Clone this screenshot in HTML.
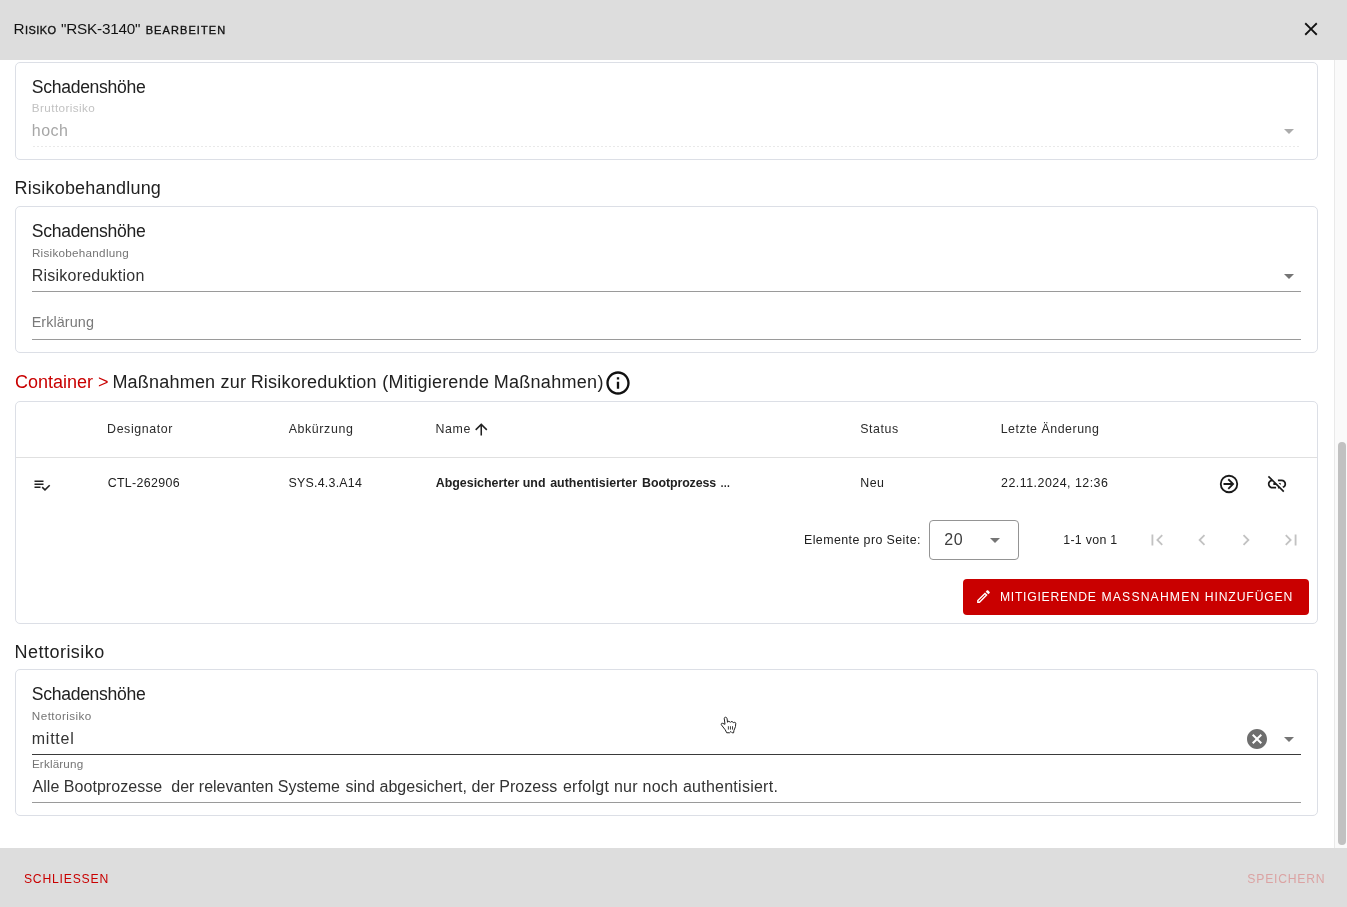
<!DOCTYPE html>
<html lang="de">
<head>
<meta charset="utf-8">
<title>Risiko bearbeiten</title>
<style>
*{box-sizing:border-box;margin:0;padding:0}
html,body{width:1347px;height:907px;overflow:hidden;background:#fff;font-family:"Liberation Sans",Arial,sans-serif;color:#212121}
.abs{position:absolute}
svg{position:absolute;display:block;overflow:visible}
#hdr{position:absolute;left:0;top:0;width:1347px;height:60px;background:#dddddd}
#ftr{position:absolute;left:0;top:848px;width:1347px;height:59px;background:#dddddd}
.card{position:absolute;left:15px;width:1303px;border:1px solid #dcdfe6;border-radius:5px;background:#fff}
.t{position:absolute;white-space:nowrap}
#txt{position:absolute;left:0;top:0;width:1347px;height:907px;will-change:transform}
.k{-webkit-text-stroke:0.35px #111}
.line{position:absolute;left:32px;width:1269px;height:1px;background:#9a9a9a}
#sbtrack{position:absolute;left:1334px;top:60px;width:13px;height:788px;background:#fafafa;border-left:1px solid #e9e9e9}
#sbthumb{position:absolute;left:1338px;top:442px;width:8px;height:403px;background:#c1c1c1;border-radius:4px}
</style>
</head>
<body>
<div id="hdr"></div>
<div id="ftr"></div>
<svg style="left:1300px;top:18px" width="22" height="22" viewBox="0 0 24 24"><path fill="#111" d="M19 6.41 17.59 5 12 10.59 6.41 5 5 6.41 10.59 12 5 17.59 6.41 19 12 13.41 17.59 19 19 17.59 13.41 12z"/></svg>

<!-- card 1 -->
<div class="card" style="top:62px;height:98px"></div>
<div class="abs" style="left:33px;top:146px;width:1268px;height:1px;background:repeating-linear-gradient(90deg,#e9e9e9 0 2px,transparent 2px 4px)"></div>
<svg style="left:1277px;top:119px" width="24" height="24" viewBox="0 0 24 24"><path fill="#ababab" d="M7 10l5 5 5-5z"/></svg>

<!-- card 2 -->
<div class="card" style="top:206px;height:147px"></div>
<svg style="left:1277px;top:264px" width="24" height="24" viewBox="0 0 24 24"><path fill="#757575" d="M7 10l5 5 5-5z"/></svg>
<div class="line" style="top:291px"></div>
<div class="line" style="top:339px"></div>

<svg style="left:604px;top:369px" width="28" height="28" viewBox="0 0 24 24"><path fill="#111" d="M11 7h2v2h-2zm0 4h2v6h-2zm1-9C6.48 2 2 6.48 2 12s4.48 10 10 10 10-4.48 10-10S17.52 2 12 2zm0 18c-4.41 0-8-3.59-8-8s3.590-8 8-8 8 3.590 8 8-3.590 8-8 8z"/></svg>

<!-- card 3 -->
<div class="card" style="top:401px;height:223px"></div>
<div class="abs" style="left:16px;top:457px;width:1301px;height:1px;background:#e0e0e0"></div>
<svg style="left:471.5px;top:420px" width="18.5" height="18.5" viewBox="0 0 24 24"><path fill="#222" d="M13 20H11V8L5.500 13.500 4.080 12.080 12 4.160 19.920 12.080 18.500 13.500 13 8V20Z"/></svg>
<svg style="left:32.5px;top:475.600px" width="18" height="18" viewBox="0 0 24 24"><path fill="#222" d="M14 10H2V12H14V10M14 6H2V8H14V6M2 16H10V14H2V16M21.500 11.500 23 13 16 20 11.500 15.500 13 14 16 17 21.500 11.500Z"/></svg>
<svg style="left:1217.800px;top:472.800px" width="22" height="22" viewBox="0 0 24 24"><path fill="#1a1a1a" d="M6 13V11H14L10.500 7.500 11.920 6.080 17.840 12 11.920 17.920 10.500 16.500 14 13H6M22 12A10 10 0 0 1 12 22 10 10 0 0 1 2 12 10 10 0 0 1 12 2 10 10 0 0 1 22 12M20 12A8 8 0 0 0 12 4 8 8 0 0 0 4 12 8 8 0 0 0 12 20 8 8 0 0 0 20 12Z"/></svg>
<svg style="left:1265.800px;top:472.800px" width="22" height="22" viewBox="0 0 24 24"><path fill="#1a1a1a" d="M17 7H13V8.900H17C18.710 8.900 20.100 10.290 20.100 12 20.100 13.430 19.120 14.630 17.790 15L19.250 16.440C20.880 15.610 22 13.950 22 12A5 5 0 0 0 17 7M16 11H13.810L15.810 13H16V11M2 4.270 5.110 7.380C3.290 8.120 2 9.910 2 12A5 5 0 0 0 7 17H11V15.100H7C5.290 15.100 3.900 13.710 3.900 12 3.900 10.410 5.110 9.100 6.660 8.930L8.730 11H8V13H10.730L13 15.270V17H14.730L18.740 21 20 19.740 3.270 3 2 4.270Z"/></svg>

<div class="abs" style="left:929px;top:520px;width:90px;height:40px;border:1px solid #949494;border-radius:4px"></div>
<svg style="left:983.300px;top:528px" width="24" height="24" viewBox="0 0 24 24"><path fill="#757575" d="M7 10l5 5 5-5z"/></svg>
<svg style="left:1145.700px;top:528.900px" width="22" height="22" viewBox="0 0 24 24"><path fill="#c2c2c2" d="M18.410 16.590 13.820 12l4.590-4.590L17 6l-6 6 6 6zM6 6h2v12H6z"/></svg>
<svg style="left:1190.900px;top:528.900px" width="22" height="22" viewBox="0 0 24 24"><path fill="#c2c2c2" d="M15.410 7.410 14 6l-6 6 6 6 1.410-1.410L10.830 12z"/></svg>
<svg style="left:1234.800px;top:528.900px" width="22" height="22" viewBox="0 0 24 24"><path fill="#c2c2c2" d="M10 6 8.590 7.410 13.170 12l-4.580 4.590L10 18l6-6z"/></svg>
<svg style="left:1279.900px;top:528.900px" width="22" height="22" viewBox="0 0 24 24"><path fill="#c2c2c2" d="M5.590 7.410 10.180 12l-4.590 4.590L7 18l6-6-6-6zM16 6h2v12h-2z"/></svg>

<div class="abs" style="left:963px;top:579px;width:346px;height:36px;background:#c90000;border-radius:4px"></div>
<svg style="left:974.700px;top:587.700px" width="17" height="17" viewBox="0 0 24 24"><path fill="#fff" d="M14.060 9 15 9.940 5.920 19H5V18.080L14.060 9M17.660 3C17.410 3 17.150 3.100 16.960 3.290L15.130 5.120 18.880 8.870 20.710 7.040C21.100 6.650 21.100 6 20.710 5.630L18.370 3.290C18.170 3.090 17.920 3 17.660 3M14.060 6.190 3 17.250V21H6.750L17.810 9.940 14.060 6.190Z"/></svg>

<!-- card 4 -->
<div class="card" style="top:669px;height:147px"></div>
<svg style="left:1245px;top:727px" width="24" height="24" viewBox="0 0 24 24"><path fill="#6e6e6e" d="M12 2C6.470 2 2 6.470 2 12s4.470 10 10 10 10-4.470 10-10S17.530 2 12 2zm5 13.590L15.590 17 12 13.410 8.410 17 7 15.590 10.590 12 7 8.410 8.410 7 12 10.590 15.590 7 17 8.410 13.410 12 17 15.590z"/></svg>
<svg style="left:1277px;top:727px" width="24" height="24" viewBox="0 0 24 24"><path fill="#757575" d="M7 10l5 5 5-5z"/></svg>
<div class="line" style="top:754px;background:#3a3a3a"></div>
<div class="line" style="top:802px"></div>

<!-- mouse pointer -->
<svg style="left:714px;top:710px" width="30" height="30" viewBox="0 0 907 907"><path fill="#fff" stroke="#222" stroke-width="30" stroke-linejoin="round" d="M345 218C318 218 308 240 311 270L333 432 250 400C225 395 208 425 225 452L340 600 385 688H470L510 650 550 690H592L602 622 650 500 658 400C655 372 610 362 588 385 575 345 510 335 492 375 475 330 420 328 410 372L395 262C390 235 372 218 345 218Z"/><path fill="none" stroke="#222" stroke-width="26" d="M435 490V592M497 490V592M560 490V592"/></svg>

<div id="txt">
<div class="t" id="ta" style="left:13.58px;top:20.85px;font-size:15.3px;line-height:15.3px;color:#111;letter-spacing:0.419px;font-variant:small-caps;">R<span class="k">isiko</span></div>
<div class="t" id="tb" style="left:61.06px;top:20.85px;font-size:15.3px;line-height:15.3px;color:#111;letter-spacing:-0.229px;">"RSK-3140"</div>
<div class="t" id="tc" style="left:145.63px;top:20.85px;font-size:15.3px;line-height:15.3px;color:#111;letter-spacing:1.103px;font-variant:small-caps;"><span class="k">bearbeiten</span></div>
<div class="t" id="c1s" style="left:31.81px;top:79.01px;font-size:17.6px;line-height:17.6px;color:#212121;letter-spacing:-0.308px;">Schadenshöhe</div>
<div class="t" id="c1l" style="left:31.85px;top:101.91px;font-size:11.7px;line-height:11.7px;color:#c2c2c2;letter-spacing:0.403px;">Bruttorisiko</div>
<div class="t" id="c1v" style="left:31.84px;top:123.10px;font-size:16px;line-height:16px;color:#a6a6a6;letter-spacing:0.457px;">hoch</div>
<div class="t" id="h1" style="left:14.62px;top:178.82px;font-size:18px;line-height:18px;color:#212121;letter-spacing:0.211px;">Risikobehandlung</div>
<div class="t" id="c2s" style="left:31.81px;top:223.10px;font-size:17.6px;line-height:17.6px;color:#212121;letter-spacing:-0.308px;">Schadenshöhe</div>
<div class="t" id="c2l" style="left:31.91px;top:246.81px;font-size:11.7px;line-height:11.7px;color:#757575;letter-spacing:0.263px;">Risikobehandlung</div>
<div class="t" id="c2v" style="left:31.65px;top:268.31px;font-size:16px;line-height:16px;color:#333;letter-spacing:0.239px;">Risikoreduktion</div>
<div class="t" id="c2p" style="left:31.65px;top:315.00px;font-size:14.4px;line-height:14.4px;color:#7a7a7a;letter-spacing:0.082px;">Erklärung</div>
<div class="t" id="h2a" style="left:15.09px;top:373.31px;font-size:18px;line-height:18px;color:#c90000;letter-spacing:-0.024px;">Container &gt;</div>
<div class="t" id="h2b1" style="left:112.41px;top:373.31px;font-size:18px;line-height:18px;color:#212121;letter-spacing:0.209px;">Maßnahmen zur</div>
<div class="t" id="h2b2" style="left:250.65px;top:373.31px;font-size:18px;line-height:18px;color:#212121;letter-spacing:0.207px;">Risikoreduktion</div>
<div class="t" id="h2b3" style="left:382.33px;top:373.31px;font-size:18px;line-height:18px;color:#212121;letter-spacing:0.224px;">(Mitigierende</div>
<div class="t" id="h2b4" style="left:493.65px;top:373.31px;font-size:18px;line-height:18px;color:#212121;letter-spacing:0.302px;">Maßnahmen)</div>
<div class="t" id="th1" style="left:107.12px;top:423.01px;font-size:12.4px;line-height:12.4px;color:#2b2b2b;letter-spacing:0.581px;">Designator</div>
<div class="t" id="th2" style="left:288.63px;top:423.01px;font-size:12.4px;line-height:12.4px;color:#2b2b2b;letter-spacing:0.618px;">Abkürzung</div>
<div class="t" id="th3" style="left:435.60px;top:423.01px;font-size:12.4px;line-height:12.4px;color:#2b2b2b;letter-spacing:0.576px;">Name</div>
<div class="t" id="th4" style="left:860.17px;top:423.01px;font-size:12.4px;line-height:12.4px;color:#2b2b2b;letter-spacing:0.564px;">Status</div>
<div class="t" id="th5" style="left:1000.64px;top:423.01px;font-size:12.4px;line-height:12.4px;color:#2b2b2b;letter-spacing:0.521px;">Letzte Änderung</div>
<div class="t" id="td1" style="left:107.65px;top:476.90px;font-size:12.4px;line-height:12.4px;color:#212121;letter-spacing:0.351px;">CTL-262906</div>
<div class="t" id="td2" style="left:288.40px;top:476.90px;font-size:12.4px;line-height:12.4px;color:#212121;letter-spacing:0.255px;">SYS.4.3.A14</div>
<div class="t" id="td3a" style="left:435.69px;top:476.90px;font-size:12.4px;line-height:12.4px;color:#212121;letter-spacing:0.019px;font-weight:bold;">Abgesicherter und</div>
<div class="t" id="td3b" style="left:550.14px;top:476.90px;font-size:12.4px;line-height:12.4px;color:#212121;letter-spacing:0.054px;font-weight:bold;">authentisierter</div>
<div class="t" id="td3c" style="left:642.06px;top:476.90px;font-size:12.4px;line-height:12.4px;color:#212121;letter-spacing:-0.085px;font-weight:bold;">Bootprozess</div>
<div class="t" id="td3d" style="left:720.35px;top:478.91px;font-size:10px;line-height:10px;color:#212121;letter-spacing:0.000px;font-weight:bold;">…</div>
<div class="t" id="td4" style="left:860.13px;top:476.90px;font-size:12.4px;line-height:12.4px;color:#212121;letter-spacing:0.561px;">Neu</div>
<div class="t" id="td5" style="left:1001.04px;top:476.90px;font-size:12.4px;line-height:12.4px;color:#212121;letter-spacing:0.492px;">22.11.2024, 12:36</div>
<div class="t" id="pg1" style="left:803.99px;top:533.90px;font-size:12.4px;line-height:12.4px;color:#212121;letter-spacing:0.423px;">Elemente pro Seite:</div>
<div class="t" id="pg2" style="left:944.17px;top:531.91px;font-size:16px;line-height:16px;color:#3d3d3d;letter-spacing:0.800px;">20</div>
<div class="t" id="pg3" style="left:1063.22px;top:533.90px;font-size:12.4px;line-height:12.4px;color:#212121;letter-spacing:0.293px;">1-1 von 1</div>
<div class="t" id="btn1" style="left:999.99px;top:590.90px;font-size:12.2px;line-height:12.2px;color:#fff;letter-spacing:0.719px;">MITIGIERENDE</div>
<div class="t" id="btn2" style="left:1101.56px;top:590.90px;font-size:12.2px;line-height:12.2px;color:#fff;letter-spacing:1.146px;">MASSNAHMEN</div>
<div class="t" id="btn3" style="left:1204.82px;top:590.90px;font-size:12.2px;line-height:12.2px;color:#fff;letter-spacing:0.856px;">HINZUFÜGEN</div>
<div class="t" id="h3" style="left:14.62px;top:642.70px;font-size:18px;line-height:18px;color:#212121;letter-spacing:0.459px;">Nettorisiko</div>
<div class="t" id="c4s" style="left:31.81px;top:686.10px;font-size:17.6px;line-height:17.6px;color:#212121;letter-spacing:-0.308px;">Schadenshöhe</div>
<div class="t" id="c4l" style="left:31.85px;top:710.20px;font-size:11.7px;line-height:11.7px;color:#757575;letter-spacing:0.427px;">Nettorisiko</div>
<div class="t" id="c4v" style="left:31.77px;top:731.10px;font-size:16px;line-height:16px;color:#333;letter-spacing:0.743px;">mittel</div>
<div class="t" id="c4m" style="left:31.91px;top:757.91px;font-size:11.7px;line-height:11.7px;color:#757575;letter-spacing:0.151px;">Erklärung</div>
<div class="t" id="c4t1" style="left:32.50px;top:778.91px;font-size:16px;line-height:16px;color:#333;letter-spacing:0.043px;">Alle Bootprozesse</div>
<div class="t" id="c4t2" style="left:171.37px;top:778.91px;font-size:16px;line-height:16px;color:#333;letter-spacing:-0.022px;">der relevanten Systeme</div>
<div class="t" id="c4t3" style="left:345.46px;top:778.91px;font-size:16px;line-height:16px;color:#333;letter-spacing:0.038px;">sind abgesichert, der Prozess</div>
<div class="t" id="c4t4" style="left:562.93px;top:778.91px;font-size:16px;line-height:16px;color:#333;letter-spacing:0.256px;">erfolgt nur noch authentisiert.</div>
<div class="t" id="f1" style="left:23.92px;top:873.21px;font-size:12.2px;line-height:12.2px;color:#c90000;letter-spacing:0.791px;">SCHLIESSEN</div>
<div class="t" id="f2" style="left:1247.34px;top:873.21px;font-size:12.2px;line-height:12.2px;color:#dba3a3;letter-spacing:0.775px;">SPEICHERN</div>
</div>

<div id="sbtrack"></div>
<div id="sbthumb"></div>
</body>
</html>
